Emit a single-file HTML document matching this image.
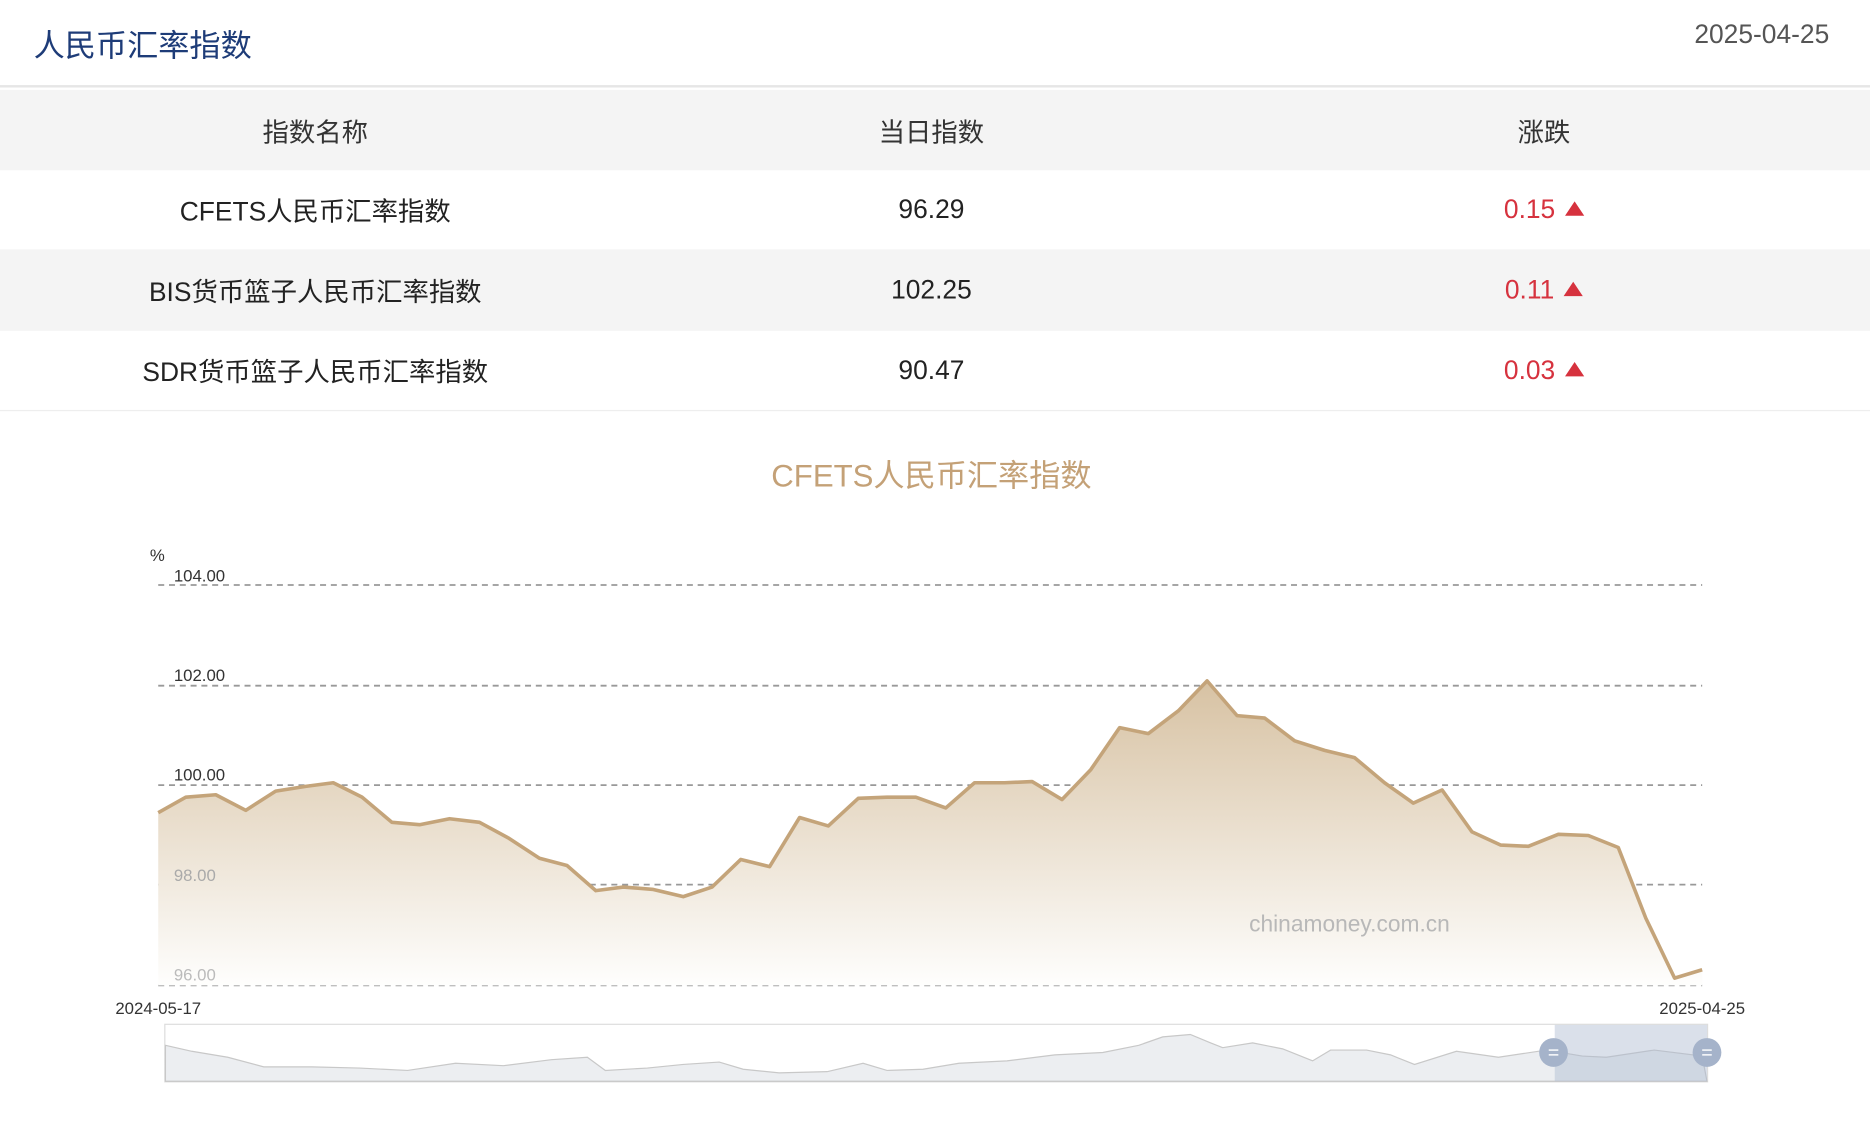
<!DOCTYPE html>
<html><head><meta charset="utf-8"><style>
html,body{margin:0;padding:0;background:#fff;overflow:hidden;width:1870px;height:1120px}
#w{position:absolute;left:0;top:0;width:1560px;height:935px;transform:scale(1.19872);transform-origin:0 0;font-family:"Liberation Sans","Noto Sans CJK SC",sans-serif}
.t{position:absolute;left:28px;top:18px;font-size:26px;color:#1e3c78}
.d{position:absolute;right:34px;top:16px;font-size:22px;color:#555}
.hl{position:absolute;left:0;width:1560px;top:71px;height:2px;background:#e6e6e6}
.row{position:absolute;left:0;width:1560px;font-size:22px;color:#222}
.row span{position:absolute;top:50%;transform:translate(-50%,-50%);white-space:nowrap}
.c1{left:263px}.c2{left:777px}.c3{left:1288px}
.red{color:#d6323e}
.tri{display:inline-block;width:0;height:0;border-left:8px solid transparent;border-right:8px solid transparent;border-bottom:12px solid #d6323e;margin-left:8px;vertical-align:2px}
</style></head><body><div id="w">
<div class="t">人民币汇率指数</div>
<div class="d">2025-04-25</div>
<div class="hl"></div>
<div class="row" style="top:75px;height:67px;background:#f4f4f4;color:#333"><span class="c1">指数名称</span><span class="c2">当日指数</span><span class="c3">涨跌</span></div>
<div class="row" style="top:142px;height:66px"><span class="c1">CFETS人民币汇率指数</span><span class="c2">96.29</span><span class="c3 red">0.15<i class="tri"></i></span></div>
<div class="row" style="top:208px;height:68px;background:#f4f4f4"><span class="c1">BIS货币篮子人民币汇率指数</span><span class="c2">102.25</span><span class="c3 red">0.11<i class="tri"></i></span></div>
<div class="row" style="top:276px;height:66px;border-bottom:1px solid #eee"><span class="c1">SDR货币篮子人民币汇率指数</span><span class="c2">90.47</span><span class="c3 red">0.03<i class="tri"></i></span></div>
<svg width="1560" height="935" style="position:absolute;left:0;top:0" font-family="Liberation Sans, Noto Sans CJK SC, sans-serif">
<defs><linearGradient id="g" x1="0" y1="560" x2="0" y2="822" gradientUnits="userSpaceOnUse"><stop offset="0" stop-color="#d6c0a0"/><stop offset="1" stop-color="#fefefd"/></linearGradient></defs>
<text x="777" y="406" text-anchor="middle" font-size="26" fill="#c4a177">CFETS人民币汇率指数</text>
<text x="125" y="468" font-size="14" fill="#333">%</text>
<g stroke="#999" stroke-width="1.5" stroke-dasharray="5,4"><line x1="132" y1="488" x2="1420" y2="488"/><line x1="132" y1="572" x2="1420" y2="572"/><line x1="132" y1="655" x2="1420" y2="655"/><line x1="132" y1="738" x2="1420" y2="738"/><line x1="132" y1="822" x2="1420" y2="822"/></g>
<path d="M132,678 L155,665 180,663 205,676 230,660 255,656 278,653 302,665 327,686 350,688 375,683 400,686 424,699 450,716 473,722 497,743 520,740 545,742 570,748 594,740 618,717 642,723 667,682 691,689 716,666 740,665 764,665 789,674 813,653 838,653 861,652 886,667 910,642 934,607 958,612 983,593 1007,568 1032,597 1055,599 1080,618 1105,626 1130,632 1155,653 1179,670 1203,659 1228,694 1252,705 1275,706 1300,696 1325,697 1350,707 1373,766 1397,816 1420,809 L1420,822 L132,822 Z" fill="url(#g)"/>
<polyline points="132,678 155,665 180,663 205,676 230,660 255,656 278,653 302,665 327,686 350,688 375,683 400,686 424,699 450,716 473,722 497,743 520,740 545,742 570,748 594,740 618,717 642,723 667,682 691,689 716,666 740,665 764,665 789,674 813,653 838,653 861,652 886,667 910,642 934,607 958,612 983,593 1007,568 1032,597 1055,599 1080,618 1105,626 1130,632 1155,653 1179,670 1203,659 1228,694 1252,705 1275,706 1300,696 1325,697 1350,707 1373,766 1397,816 1420,809" fill="none" stroke="#c4a47a" stroke-width="3" stroke-linejoin="round"/>
<g font-size="14"><text x="145" y="485" fill="#333">104.00</text><text x="145" y="568" fill="#333">102.00</text><text x="145" y="651" fill="#333">100.00</text><text x="145" y="735" fill="#aaa">98.00</text><text x="145" y="818" fill="#bbb">96.00</text></g>
<text x="1042" y="777" font-size="19" fill="#b8b8b8">chinamoney.com.cn</text>
<text x="132" y="846" text-anchor="middle" font-size="14" fill="#333">2024-05-17</text>
<text x="1420" y="846" text-anchor="middle" font-size="14" fill="#333">2025-04-25</text>
<rect x="137.5" y="854.5" width="1287" height="48" fill="#fff" stroke="#ddd"/>
<path d="M138,872 L160,877 190,882 220,890 260,890 300,891 340,893 380,887 420,889 460,884 490,882 505,893 540,891 570,888 600,886 620,892 650,895 690,894 720,887 740,893 770,892 800,887 840,885 880,880 920,878 950,872 970,865 993,863 1010,870 1020,874 1045,870 1070,875 1095,885 1110,876 1140,876 1160,880 1180,888 1215,877 1250,882 1290,876 1320,881 1340,882 1380,876 1420,881 L1424,902 L138,902 Z" fill="#eceef1" stroke="#c8c8c8" stroke-width="1"/>
<rect x="1297" y="855" width="127" height="47" fill="#aebbd1" fill-opacity="0.45"/>
<g fill="#a5b3ca"><ellipse cx="1296" cy="878" rx="12" ry="12"/><ellipse cx="1424" cy="878" rx="12" ry="12"/></g>
<g stroke="#fff" stroke-width="1.2"><line x1="1292" y1="876" x2="1300" y2="876"/><line x1="1292" y1="880" x2="1300" y2="880"/><line x1="1420" y1="876" x2="1428" y2="876"/><line x1="1420" y1="880" x2="1428" y2="880"/></g>
</svg>
</div></body></html>
